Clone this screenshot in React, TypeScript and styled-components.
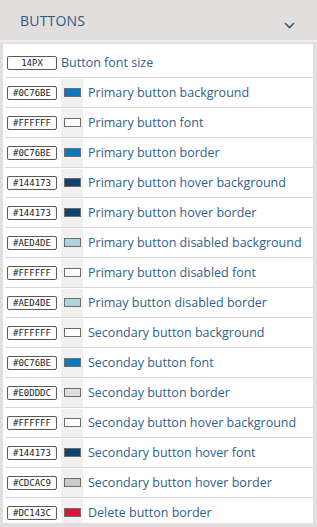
import React from "react";
import styled, { createGlobalStyle } from "styled-components";

const GlobalStyle = createGlobalStyle`
  html, body {
    margin: 0;
    padding: 0;
    background: #e1dedd;
  }
  body {
    font-family: "Open Sans", "Noto Sans", sans-serif;
  }
`;

const Accordion = styled.div`
  width: 317px;
  height: 527px;
  display: flex;
  flex-direction: column;
  background: #e1dedd;
  overflow: hidden;
`;

const Header = styled.div`
  flex-shrink: 0;
  display: flex;
  align-items: center;
  justify-content: space-between;
  padding: 0 22px 0 20px;
  border-bottom: 2px solid #efeeed;
  box-sizing: border-box;
  height: 42px;
  color: #2e5a84;
  font-size: 14px;
  letter-spacing: 0.2px;
`;

const Chevron = styled.svg`
  margin-top: 10px;
`;

const Panel = styled.div`
  margin: 2px 4px 4px 3px;
  background: #ffffff;
  padding-top: 4px;
  flex: 1;
  min-height: 0;
  overflow: hidden;
`;

const Row = styled.div`
  height: 29px;
  display: flex;
  align-items: center;
  border-bottom: 1px solid #d6d6d6;
  margin: 0 0 0 2px;
  &:last-child {
    border-bottom: none;
  }
`;

const ValueBox = styled.div`
  width: 48px;
  height: 12px;
  margin-left: 2px;
  border: 1px solid #5a5a5a;
  border-radius: 2px;
  font-family: "DejaVu Sans Mono", "Liberation Mono", monospace;
  font-size: 9px;
  line-height: 12px;
  color: #222;
  text-align: center;
  flex-shrink: 0;
`;

const SwatchCell = styled.div`
  width: 22px;
  height: 28px;
  margin-left: 4px;
  background: #f0f0f0;
  display: flex;
  align-items: center;
  justify-content: center;
  flex-shrink: 0;
`;

const Swatch = styled.div<{ $color: string }>`
  width: 15px;
  height: 7px;
  border: 1px solid #6d6d6d;
  background: ${(p) => p.$color};
`;

const Label = styled.span<{ $gap: number }>`
  margin-left: ${(p) => p.$gap}px;
  font-size: 12.5px;
  color: #2e5f8d;
  white-space: nowrap;
`;

type Item = { value: string; label: string; color?: string };

const items: Item[] = [
  { value: "14PX", label: "Button font size" },
  { value: "#0C76BE", label: "Primary button background", color: "#0C76BE" },
  { value: "#FFFFFF", label: "Primary button font", color: "#FFFFFF" },
  { value: "#0C76BE", label: "Primary button border", color: "#0C76BE" },
  { value: "#144173", label: "Primary button hover background", color: "#144173" },
  { value: "#144173", label: "Primary button hover border", color: "#144173" },
  { value: "#AED4DE", label: "Primary button disabled background", color: "#AED4DE" },
  { value: "#FFFFFF", label: "Primary button disabled font", color: "#FFFFFF" },
  { value: "#AED4DE", label: "Primay button disabled border", color: "#AED4DE" },
  { value: "#FFFFFF", label: "Secondary button background", color: "#FFFFFF" },
  { value: "#0C76BE", label: "Seconday button font", color: "#0C76BE" },
  { value: "#E0DDDC", label: "Seconday button border", color: "#E0DDDC" },
  { value: "#FFFFFF", label: "Seconday button hover background", color: "#FFFFFF" },
  { value: "#144173", label: "Secondary button hover font", color: "#144173" },
  { value: "#CDCAC9", label: "Secondary button hover border", color: "#CDCAC9" },
  { value: "#DC143C", label: "Delete button border", color: "#DC143C" },
];

const App = () => {
  return (
    <>
      <GlobalStyle />
      <Accordion>
        <Header>
          <span>BUTTONS</span>
          <Chevron width="11" height="7" viewBox="0 0 11 7">
            <path d="M1 1 L5.5 5.5 L10 1" fill="none" stroke="#2e5a84" strokeWidth="1.6" />
          </Chevron>
        </Header>
        <Panel>
          {items.map((i, idx) => (
            <Row key={idx}>
              <ValueBox>{i.value}</ValueBox>
              {i.color && (
                <SwatchCell>
                  <Swatch $color={i.color} />
                </SwatchCell>
              )}
              <Label $gap={i.color ? 5 : 4}>{i.label}</Label>
            </Row>
          ))}
        </Panel>
      </Accordion>
    </>
  );
};

export default App;
